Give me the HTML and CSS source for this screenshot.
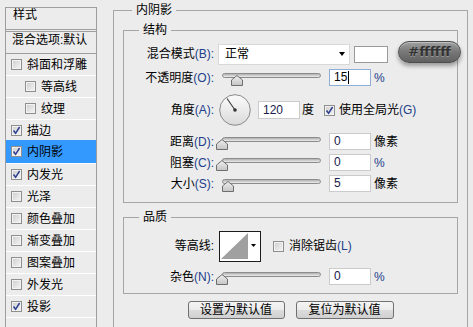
FILE: index.html
```html
<!DOCTYPE html>
<html lang="zh-CN">
<head>
  <meta charset="UTF-8">
  <meta name="viewport" content="width=device-width, initial-scale=1.0">
  <title>图层样式 - 内阴影</title>
  <link rel="stylesheet" href="styles.css">
</head>
<body>
  <svg class="defs" width="0" height="0" aria-hidden="true">
    <defs>
      <linearGradient id="thumbFill" x1="0" y1="0" x2="0" y2="1">
        <stop offset="0" stop-color="#f0f0f0"/>
        <stop offset="1" stop-color="#c4c4c4"/>
      </linearGradient>
      <linearGradient id="dialFill" x1="0" y1="0" x2="0" y2="1">
        <stop offset="0" stop-color="#fbfbfb"/>
        <stop offset="1" stop-color="#dadada"/>
      </linearGradient>
    </defs>
  </svg>

  <div class="dialog">
    <div class="styles">
      <div class="styles-head">样式</div>
      <div class="styles-blend">混合选项:默认</div>
      <ul class="fx-list">
        <li><span class="check"></span>斜面和浮雕</li>
        <li class="sub"><span class="check"></span>等高线</li>
        <li class="sub"><span class="check"></span>纹理</li>
        <li><span class="check"><svg width="9" height="9" viewBox="0 0 9 9"><path d="M1.5 4.5 L3.6 7.3 L7.6 1" fill="none" stroke="#2b3d8f" stroke-width="1.5"/></svg></span>描边</li>
        <li class="active"><span class="check"><svg width="9" height="9" viewBox="0 0 9 9"><path d="M1.5 4.5 L3.6 7.3 L7.6 1" fill="none" stroke="#2b3d8f" stroke-width="1.5"/></svg></span>内阴影</li>
        <li><span class="check"><svg width="9" height="9" viewBox="0 0 9 9"><path d="M1.5 4.5 L3.6 7.3 L7.6 1" fill="none" stroke="#2b3d8f" stroke-width="1.5"/></svg></span>内发光</li>
        <li><span class="check"></span>光泽</li>
        <li><span class="check"></span>颜色叠加</li>
        <li><span class="check"></span>渐变叠加</li>
        <li><span class="check"></span>图案叠加</li>
        <li><span class="check"></span>外发光</li>
        <li><span class="check"><svg width="9" height="9" viewBox="0 0 9 9"><path d="M1.5 4.5 L3.6 7.3 L7.6 1" fill="none" stroke="#2b3d8f" stroke-width="1.5"/></svg></span>投影</li>
      </ul>
    </div>

    <div class="settings">
      <fieldset class="group outer">
        <legend>内阴影</legend>

        <fieldset class="group inner structure">
          <legend>结构</legend>

          <div class="row row-blend">
            <span class="label">混合模式<span class="key">(B):</span></span>
            <div class="select"><span>正常</span><span class="arrow"></span></div>
            <span class="swatch"></span>
          </div>

          <div class="row row-opacity">
            <span class="label">不透明度<span class="key">(O):</span></span>
            <div class="slider">
              <span class="track"></span>
              <svg class="thumb" style="left: 15px" width="12" height="11" viewBox="0 0 12 11"><path d="M6 0.5 L11.5 5 V10.5 H0.5 V5 Z" fill="url(#thumbFill)" stroke="#6e6e6e"/></svg>
            </div>
            <span class="num focus">15<span class="caret"></span></span>
            <span class="unit key">%</span>
          </div>

          <div class="row row-angle">
            <span class="label">角度<span class="key">(A):</span></span>
            <svg class="dial" width="32" height="32" viewBox="0 0 32 32">
              <circle cx="16" cy="16" r="15.3" fill="url(#dialFill)" stroke="#8a8a8a"/>
              <line x1="16" y1="16" x2="8" y2="4.5" stroke="#3a3a3a" stroke-width="1.1"/>
              <circle cx="16" cy="16" r="1.8" fill="#333"/>
            </svg>
            <span class="num angle">120</span>
            <span class="unit">度</span>
            <span class="check"><svg width="9" height="9" viewBox="0 0 9 9"><path d="M1.5 4.5 L3.6 7.3 L7.6 1" fill="none" stroke="#2b3d8f" stroke-width="1.5"/></svg></span>
            <span class="check-text">使用全局光<span class="key">(G)</span></span>
          </div>

          <div class="row row-slider first">
            <span class="label">距离<span class="key">(D):</span></span>
            <div class="slider">
              <span class="track"></span>
              <svg class="thumb" style="left: 0px" width="12" height="11" viewBox="0 0 12 11"><path d="M6 0.5 L11.5 5 V10.5 H0.5 V5 Z" fill="url(#thumbFill)" stroke="#6e6e6e"/></svg>
            </div>
            <span class="num">0</span>
            <span class="unit">像素</span>
          </div>

          <div class="row row-slider">
            <span class="label">阻塞<span class="key">(C):</span></span>
            <div class="slider">
              <span class="track"></span>
              <svg class="thumb" style="left: 0px" width="12" height="11" viewBox="0 0 12 11"><path d="M6 0.5 L11.5 5 V10.5 H0.5 V5 Z" fill="url(#thumbFill)" stroke="#6e6e6e"/></svg>
            </div>
            <span class="num">0</span>
            <span class="unit key">%</span>
          </div>

          <div class="row row-slider">
            <span class="label">大小<span class="key">(S):</span></span>
            <div class="slider">
              <span class="track"></span>
              <svg class="thumb" style="left: 6px" width="12" height="11" viewBox="0 0 12 11"><path d="M6 0.5 L11.5 5 V10.5 H0.5 V5 Z" fill="url(#thumbFill)" stroke="#6e6e6e"/></svg>
            </div>
            <span class="num">5</span>
            <span class="unit">像素</span>
          </div>
        </fieldset>

        <fieldset class="group inner quality">
          <legend>品质</legend>

          <div class="row row-contour">
            <span class="label">等高线:</span>
            <svg class="contour" width="42" height="31" viewBox="0 0 42 31">
              <rect x="0.5" y="0.5" width="41" height="30" fill="#fff" stroke="#1c1c1c"/>
              <polygon points="2,28 29,2 29,28" fill="#a0a0a0"/>
              <path d="M32 13 H37 L34.5 16 Z" fill="#000"/>
            </svg>
            <span class="check"></span>
            <span class="check-text">消除锯齿<span class="key">(L)</span></span>
          </div>

          <div class="row row-slider noise">
            <span class="label">杂色<span class="key">(N):</span></span>
            <div class="slider">
              <span class="track"></span>
              <svg class="thumb" style="left: 0px" width="12" height="11" viewBox="0 0 12 11"><path d="M6 0.5 L11.5 5 V10.5 H0.5 V5 Z" fill="url(#thumbFill)" stroke="#6e6e6e"/></svg>
            </div>
            <span class="num">0</span>
            <span class="unit key">%</span>
          </div>
        </fieldset>

        <div class="buttons">
          <button class="btn btn-set">设置为默认值</button>
          <button class="btn btn-reset">复位为默认值</button>
        </div>
      </fieldset>
    </div>

    <div class="hex-badge">#ffffff</div>
  </div>
</body>
</html>
```

FILE: styles.css
```css
html,
body {
  overflow: hidden;
}

body {
  margin: 0;
  padding: 0;
  background: #ececec;
  color: #000;
  font-family: "Liberation Sans", "Noto Sans CJK SC", sans-serif;
  font-size: 12px;
  line-height: 16px;
}

.defs {
  position: absolute;
}

.dialog {
  position: relative;
  display: flex;
  align-items: flex-start;
  height: 327px;
  box-sizing: border-box;
  padding: 2px 0 0 5px;
  overflow: hidden;
}

/* left list of effects */

.styles {
  flex: none;
  width: 92px;
  height: 325px;
  margin-top: 5px;
  box-sizing: border-box;
  border: 1px solid #9e9e9e;
  border-bottom: none;
}

.styles-head {
  height: 21px;
  padding-left: 7px;
  line-height: 14px;
  border-bottom: 3px double #9e9e9e;
}

.styles-blend {
  height: 21px;
  padding-left: 6px;
  line-height: 16px;
  white-space: nowrap;
  border-bottom: 1px solid #9e9e9e;
}

.fx-list {
  list-style: none;
  margin: 0;
  padding: 0;
}

.fx-list li {
  display: flex;
  align-items: center;
  height: 21px;
  padding-left: 5px;
  border-bottom: 1px solid #fff;
  white-space: nowrap;
}

.fx-list li.sub {
  padding-left: 19px;
}

.fx-list li.active {
  height: 23px;
  margin-top: -2px;
  background: #3399ff;
}

.fx-list .check {
  margin-right: 5px;
}

.check {
  flex: none;
  display: inline-flex;
  align-items: center;
  justify-content: center;
  width: 11px;
  height: 11px;
  box-sizing: border-box;
  border: 1px solid #8e8f8f;
  background: linear-gradient(135deg, #cdcdcd, #f6f6f6);
  box-shadow: inset 0 0 0 1px #f2f2f2;
}

/* right settings */

.settings {
  margin-left: 16px;
}

.group {
  margin: 0;
  min-width: 0;
  border: 1px solid #a6a6a6;
}

.group legend {
  padding: 0 4px;
  line-height: 16px;
}

.outer {
  width: 355px;
  height: 340px;
  box-sizing: border-box;
  padding: 4px 9px 0;
}

.outer > legend {
  margin-left: 9px;
}

.inner {
  padding: 0;
}

.inner > legend {
  margin-left: 15px;
}

.structure {
  padding: 5px 0 8px;
}

.quality {
  margin-top: 6px;
  padding: 5px 0 6px;
}

.row {
  display: flex;
  align-items: center;
  height: 21px;
  white-space: nowrap;
}

.label {
  flex: none;
  width: 90px;
  text-align: right;
}

.key {
  color: #22408a;
}

.row-blend {
  height: 22px;
}

.row-opacity {
  margin-top: 2px;
}

.row-angle {
  height: 34px;
  margin-top: 5px;
}

.row-slider.first {
  margin-top: 4px;
}

.select {
  flex: none;
  display: flex;
  align-items: center;
  width: 132px;
  height: 21px;
  margin-left: 4px;
  padding-left: 6px;
  box-sizing: border-box;
  border: 1px solid #d8d8d8;
  background: #fff;
}

.select .arrow {
  margin-left: auto;
  margin-right: 4px;
  border-left: 3.5px solid transparent;
  border-right: 3.5px solid transparent;
  border-top: 4px solid #000;
}

.swatch {
  flex: none;
  width: 34px;
  height: 17px;
  margin-left: 4px;
  box-sizing: border-box;
  border: 1px solid #9a9a9a;
  background: #fff;
}

.slider {
  position: relative;
  flex: none;
  width: 99px;
  height: 21px;
  margin-left: 8px;
}

.track {
  position: absolute;
  left: 0;
  right: 0;
  top: 6px;
  height: 5px;
  box-sizing: border-box;
  border: 1px solid #8c8c8c;
  border-radius: 3px;
  background: linear-gradient(#b0b0b0, #ececec);
}

.thumb {
  position: absolute;
  top: 8px;
  margin-left: -6px;
}

.num {
  flex: none;
  display: flex;
  align-items: center;
  width: 42px;
  height: 17px;
  margin-left: 8px;
  padding-left: 4px;
  box-sizing: border-box;
  border: 1px solid #cbcbcb;
  background: #fff;
  color: #16204a;
  line-height: 15px;
}

.num.focus {
  border-color: #8eaed6;
  color: #000;
}

.caret {
  width: 1px;
  height: 13px;
  margin-left: 1px;
  background: #000;
}

.num.angle {
  height: 18px;
  margin-left: 7px;
}

.unit {
  margin-left: 3px;
}

.dial {
  flex: none;
  margin-left: 5px;
}

.row-angle .unit {
  margin-left: 2px;
}

.row-angle .check {
  margin-left: 10px;
}

.check-text {
  margin-left: 4px;
}

.row-contour {
  height: 32px;
}

.contour {
  flex: none;
  margin-left: 5px;
}

.row-contour .check {
  margin-left: 12px;
}

.row-contour .check-text {
  margin-left: 5px;
}

.noise {
  margin-top: 4px;
}

.buttons {
  display: flex;
  justify-content: center;
  gap: 11px;
  margin-top: 7px;
}

.btn {
  height: 18px;
  padding: 0;
  border: 1px solid #707070;
  border-radius: 3px;
  background: linear-gradient(#f4f4f4, #ebebeb 50%, #dcdcdc 51%, #d0d0d0);
  font-family: "Liberation Sans", "Noto Sans CJK SC", sans-serif;
  font-size: 12px;
  line-height: 16px;
  color: #000;
}

.btn-set {
  width: 97px;
}

.btn-reset {
  width: 98px;
}

/* annotation badge over the dialog */

.hex-badge {
  position: absolute;
  left: 398px;
  top: 41px;
  width: 63px;
  height: 22px;
  box-sizing: border-box;
  border: 1px solid #4e4e4e;
  border-radius: 11px;
  background: linear-gradient(#a2a2a2, #7a7a7a 45%, #606060);
  box-shadow: 0 3px 4px rgba(0, 0, 0, 0.35), inset 0 1px 0 rgba(255, 255, 255, 0.35);
  color: #333;
  font-family: "DejaVu Sans", sans-serif;
  font-weight: bold;
  font-size: 13px;
  line-height: 20px;
  text-align: center;
  text-shadow: 0 1px 0 rgba(255, 255, 255, 0.3);
}
```
